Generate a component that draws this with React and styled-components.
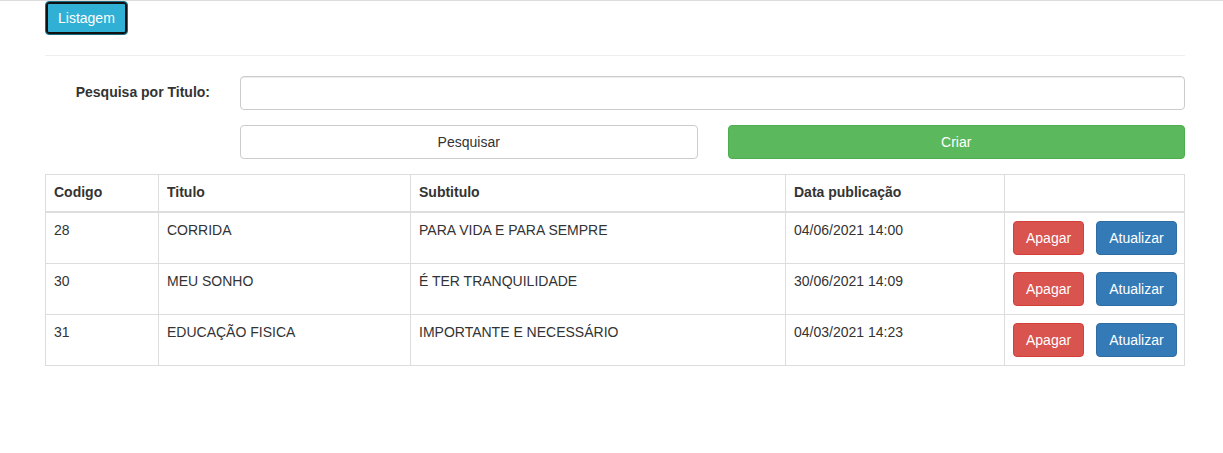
import React from "react"
import styled, { createGlobalStyle, css } from "styled-components"

const GlobalStyle = createGlobalStyle`
  * { box-sizing: border-box; }
  body {
    margin: 0;
    border-top: 1px solid #dcdcdc;
    background: #fff;
    font-family: "Liberation Sans", Arial, sans-serif;
    font-size: 14px;
    line-height: 1.42857;
    color: #333;
  }
`

const Page = styled.div`
  padding: 0 38px 0 45px;
`

const variants = {
  info: css`
    background: #31b0d5;
    border-color: #1b6d85;
    color: #fff;
    box-shadow: inset 0 0 0 2px #111;
  `,
  default: css`
    background: #fff;
    border-color: #ccc;
    color: #333;
  `,
  success: css`
    background: #5cb85c;
    border-color: #4cae4c;
    color: #fff;
  `,
  danger: css`
    background: #d9534f;
    border-color: #d43f3a;
    color: #fff;
  `,
  primary: css`
    background: #337ab7;
    border-color: #2e6da4;
    color: #fff;
  `
}

const Button = styled.button`
  display: inline-block;
  height: 34px;
  padding: 6px 12px;
  border: 1px solid transparent;
  border-radius: 4px;
  font-family: inherit;
  font-size: 14px;
  line-height: 20px;
  cursor: pointer;
  white-space: nowrap;
  ${p => variants[p.$variant || "default"]}
  ${p => p.$block && css`width: 100%;`}
`

const Rule = styled.hr`
  margin: 20px 0;
  border: 0;
  border-top: 1px solid #eee;
`

const Form = styled.form`
  display: grid;
  grid-template-columns: 165px 457.5px 457.5px;
  column-gap: 30px;
  row-gap: 15px;
  margin-bottom: 15px;
`

const Label = styled.label`
  padding-top: 7px;
  text-align: right;
  font-weight: bold;
`

const Input = styled.input`
  grid-column: 2 / span 2;
  height: 34px;
  padding: 6px 12px;
  border: 1px solid #ccc;
  border-radius: 4px;
  box-shadow: inset 0 1px 1px rgba(0, 0, 0, 0.075);
  font-family: inherit;
  font-size: 14px;
`

const Spacer = styled.div``

const Table = styled.table`
  width: 1139px;
  table-layout: fixed;
  border-collapse: collapse;
  border: 1px solid #ddd;
`

const Th = styled.th`
  padding: 8px;
  text-align: left;
  vertical-align: bottom;
  border: 1px solid #ddd;
  border-bottom: 2px solid #ddd;
  font-weight: bold;
  width: ${p => p.$w}px;
`

const Td = styled.td`
  padding: 8px;
  vertical-align: top;
  border: 1px solid #ddd;
`

const Actions = styled.div`
  display: flex;
  gap: 12px;
`

const rows = [
  ["28", "CORRIDA", "PARA VIDA E PARA SEMPRE", "04/06/2021 14:00"],
  ["30", "MEU SONHO", "É TER TRANQUILIDADE", "30/06/2021 14:09"],
  ["31", "EDUCAÇÃO FISICA", "IMPORTANTE E NECESSÁRIO", "04/03/2021 14:23"]
]

export default function App() {
  return (
    <Page>
      <GlobalStyle />
      <Button $variant="info">Listagem</Button>
      <Rule />
      <Form onSubmit={e => e.preventDefault()}>
        <Label htmlFor="titulo">Pesquisa por Titulo:</Label>
        <Input id="titulo" type="text" />
        <Spacer />
        <Button type="button" $block>Pesquisar</Button>
        <Button type="button" $variant="success" $block>Criar</Button>
      </Form>
      <Table>
        <thead>
          <tr>
            <Th $w={113}>Codigo</Th>
            <Th $w={252}>Titulo</Th>
            <Th $w={375}>Subtitulo</Th>
            <Th $w={219}>Data publicação</Th>
            <Th $w={180}></Th>
          </tr>
        </thead>
        <tbody>
          {rows.map(r => (
            <tr key={r[0]}>
              {r.map((c, i) => (
                <Td key={i}>{c}</Td>
              ))}
              <Td>
                <Actions>
                  <Button $variant="danger">Apagar</Button>
                  <Button $variant="primary">Atualizar</Button>
                </Actions>
              </Td>
            </tr>
          ))}
        </tbody>
      </Table>
    </Page>
  )
}
